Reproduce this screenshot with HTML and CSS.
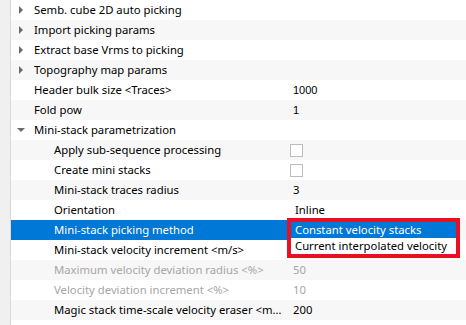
FILE: index.html
```html
<!DOCTYPE html>
<html>
<head>
    <link rel="stylesheet" href="styles.css">
</head>
<body>
    <div class="props">
        <div class="row"><div class="name top"><span class="arrow right"></span>Semb. cube 2D auto picking</div><div class="value"></div></div>
        <div class="row"><div class="name top"><span class="arrow right"></span>Import picking params</div><div class="value"></div></div>
        <div class="row"><div class="name top"><span class="arrow right"></span>Extract base Vrms to picking</div><div class="value"></div></div>
        <div class="row"><div class="name top"><span class="arrow right"></span>Topography map params</div><div class="value"></div></div>
        <div class="row"><div class="name top">Header bulk size &lt;Traces&gt;</div><div class="value num">1000</div></div>
        <div class="row"><div class="name top">Fold pow</div><div class="value num">1</div></div>
        <div class="row"><div class="name top"><span class="arrow down"></span>Mini-stack parametrization</div><div class="value"></div></div>
        <div class="row"><div class="name sub">Apply sub-sequence processing</div><div class="value"><span class="check"></span></div></div>
        <div class="row"><div class="name sub">Create mini stacks</div><div class="value"><span class="check"></span></div></div>
        <div class="row"><div class="name sub">Mini-stack traces radius</div><div class="value">3</div></div>
        <div class="row"><div class="name sub">Orientation</div><div class="value combo">Inline</div></div>
        <div class="row selected">
            <div class="name sub">Mini-stack picking method</div>
            <div class="value">
                <div class="popup">
                    <div class="option active">Constant velocity stacks</div>
                    <div class="option">Current interpolated velocity</div>
                </div>
            </div>
        </div>
        <div class="row"><div class="name sub">Mini-stack velocity increment &lt;m/s&gt;</div><div class="value"></div></div>
        <div class="row disabled"><div class="name sub">Maximum velocity deviation radius &lt;%&gt;</div><div class="value">50</div></div>
        <div class="row disabled"><div class="name sub">Velocity deviation increment &lt;%&gt;</div><div class="value">10</div></div>
        <div class="row"><div class="name sub clip">Magic stack time-scale velocity eraser &lt;m/s&gt;</div><div class="value">200</div></div>
        <div class="row"><div class="name"></div><div class="value"></div></div>
    </div>
</body>
</html>
```

FILE: styles.css
```css
body {
    margin: 0;
    padding: 0;
    background: #ffffff;
    font-family: 'Noto Sans', sans-serif;
    font-size: 11.3px;
    color: #000000;
    overflow: hidden;
}

.props {
    width: 466px;
    height: 325px;
    border-left: 10px solid #f0f0f0;
    box-shadow: inset 1px 0 0 #d9d9d9;
    box-sizing: border-box;
    padding-left: 1px;
}

.row {
    display: grid;
    grid-template-columns: 277px 1fr;
    height: 20px;
    line-height: 20px;
}

.row:nth-child(even) {
    background: #f7f7f7;
}

.name {
    display: block;
    white-space: nowrap;
    overflow: hidden;
    text-overflow: ellipsis;
}

.name.top {
    padding-left: 23px;
    position: relative;
}

.name.sub {
    padding-left: 43px;
}

.name.clip {
    padding-right: 4px;
}

.arrow {
    position: absolute;
    width: 0;
    height: 0;
}

.arrow.right {
    left: 8px;
    top: 6px;
    border-top: 4px solid transparent;
    border-bottom: 4px solid transparent;
    border-left: 4px solid #6a6a6a;
}

.arrow.down {
    left: 6px;
    top: 8px;
    border-left: 4px solid transparent;
    border-right: 4px solid transparent;
    border-top: 4px solid #6a6a6a;
}

.value {
    padding-left: 5px;
    position: relative;
    white-space: nowrap;
}

.value.num {
    font-family: 'Liberation Sans', sans-serif;
    font-size: 11px;
}

.value.combo {
    padding-left: 7px;
}

.check {
    display: inline-block;
    width: 11px;
    height: 11px;
    border: 1px solid #bdbdbd;
    background: #ffffff;
    margin-left: -3px;
    vertical-align: -3px;
}

.selected .name {
    background: #0078d7;
    color: #ffffff;
}

.selected {
    background: #ffffff;
}

.disabled {
    color: #a6a6a6;
}

.popup {
    position: absolute;
    left: -1px;
    top: -2px;
    width: 165px;
    border: 4px solid #e81123;
    background: #ffffff;
    z-index: 2;
}

.option {
    height: 16px;
    line-height: 16px;
    padding-left: 4px;
    white-space: nowrap;
}

.option.active {
    background: #0078d7;
    color: #ffffff;
}
```
